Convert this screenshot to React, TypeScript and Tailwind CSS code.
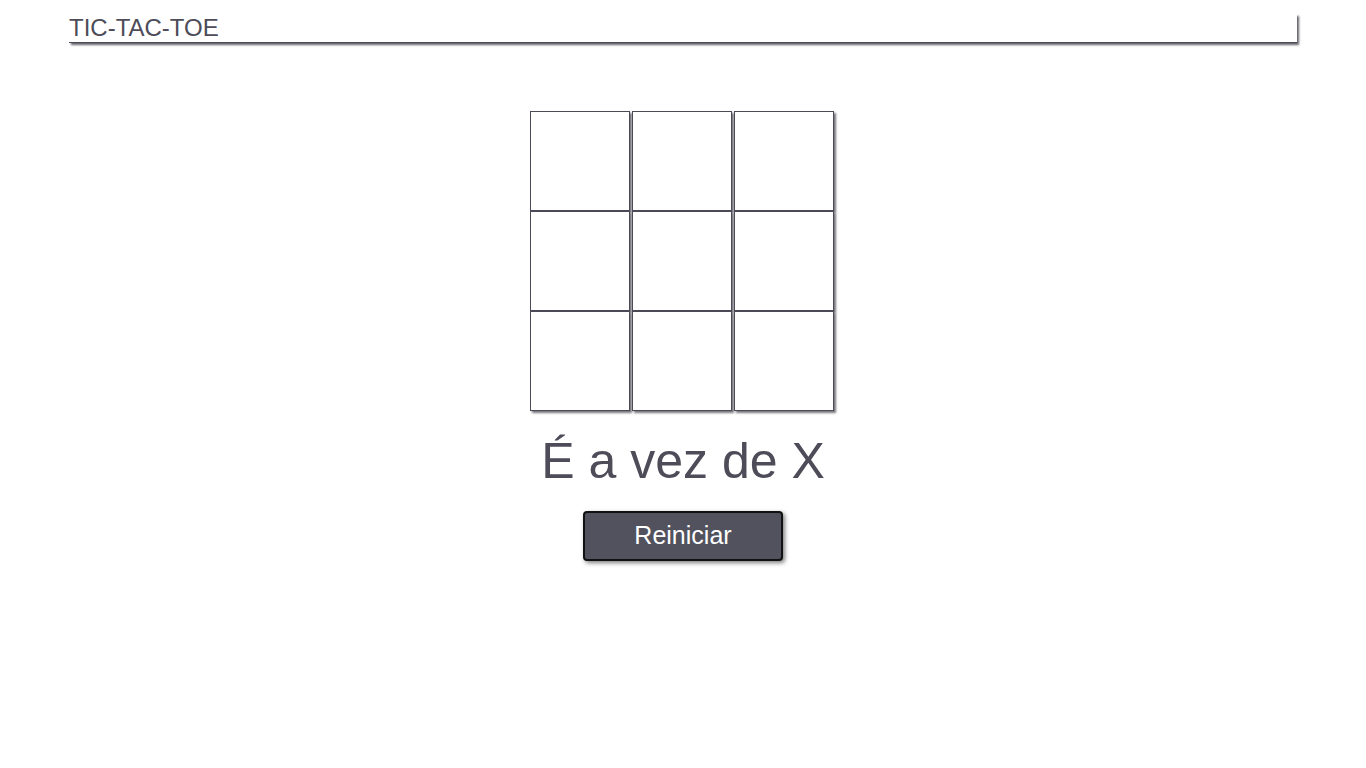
const cells = [0, 1, 2, 3, 4, 5, 6, 7, 8];

const Cell: React.FC = () => (
  <div className="w-[100px] h-[100px] bg-white border border-[#4b4a56] shadow-[2px_2px_2px_rgba(60,60,70,0.7)]" />
);

export default function App() {
  const rows = [cells.slice(0, 3), cells.slice(3, 6), cells.slice(6, 9)];

  return (
    <div className="min-h-screen bg-white font-['Liberation_Sans',Arial,sans-serif] text-[#4d4c58]">
      {/* Header */}
      <div className="pt-[14px] px-[69px]">
        <div className="h-[29px] border-b border-[#4b4a56] shadow-[2px_2px_2px_rgba(60,60,70,0.8)] flex items-end">
          <h1 className="text-[24px] leading-[28px] font-normal">TIC-TAC-TOE</h1>
        </div>
      </div>

      {/* Board */}
      <div className="flex flex-col items-center mt-[68px]">
        <div className="flex flex-col mr-[2px]">
          {rows.map((row, i) => (
            <div key={i} className="flex gap-[2px]">
              {row.map(c => (
                <Cell key={c} />
              ))}
            </div>
          ))}
        </div>

        <p className="mt-[20px] text-[50px] leading-[60px]">É a vez de X</p>

        <button className="mt-[20px] w-[200px] h-[50px] rounded-[4px] border-2 border-[#111] bg-[#52515e] text-white text-[25px] shadow-[2px_2px_4px_rgba(0,0,0,0.5)]">
          Reiniciar
        </button>
      </div>
    </div>
  );
}
